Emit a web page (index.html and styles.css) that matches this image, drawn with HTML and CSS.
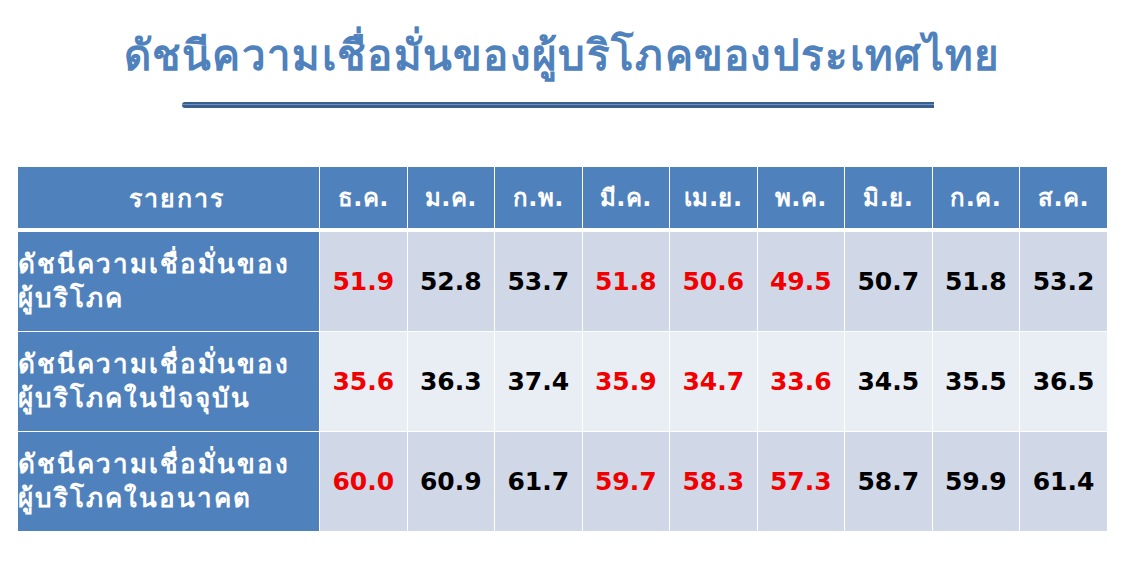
FILE: index.html
```html
<!DOCTYPE html>
<html lang="th">
<head>
<meta charset="utf-8">
<link rel="stylesheet" href="styles.css">
</head>
<body>
<div class="page">
  <h1 class="title">ดัชนีความเชื่อมั่นของผู้บริโภคของประเทศไทย</h1>
  <div class="rule"></div>
  <table class="grid">
    <thead>
      <tr>
        <th class="label-head">รายการ</th>
        <th>ธ.ค.</th><th>ม.ค.</th><th>ก.พ.</th><th>มี.ค.</th><th>เม.ย.</th><th>พ.ค.</th><th>มิ.ย.</th><th>ก.ค.</th><th>ส.ค.</th>
      </tr>
    </thead>
    <tbody>
      <tr class="dark">
        <td class="label">ดัชนีความเชื่อมั่นของ<br>ผู้บริโภค</td>
        <td class="red">51.9</td><td>52.8</td><td>53.7</td><td class="red">51.8</td><td class="red">50.6</td><td class="red">49.5</td><td>50.7</td><td>51.8</td><td>53.2</td>
      </tr>
      <tr class="light">
        <td class="label">ดัชนีความเชื่อมั่นของ<br>ผู้บริโภคในปัจจุบัน</td>
        <td class="red">35.6</td><td>36.3</td><td>37.4</td><td class="red">35.9</td><td class="red">34.7</td><td class="red">33.6</td><td>34.5</td><td>35.5</td><td>36.5</td>
      </tr>
      <tr class="dark">
        <td class="label">ดัชนีความเชื่อมั่นของ<br>ผู้บริโภคในอนาคต</td>
        <td class="red">60.0</td><td>60.9</td><td>61.7</td><td class="red">59.7</td><td class="red">58.3</td><td class="red">57.3</td><td>58.7</td><td>59.9</td><td>61.4</td>
      </tr>
    </tbody>
  </table>
</div>
</body>
</html>
```

FILE: styles.css
```css
html, body {
  margin: 0;
  padding: 0;
  background: #ffffff;
}
.page {
  width: 1124px;
  height: 574px;
  padding-top: 26px;
  box-sizing: border-box;
  font-family: "DejaVu Sans", "Noto Sans", sans-serif;
}
.title {
  margin: 0;
  text-align: center;
  color: #4f81bd;
  font-size: 42px;
  letter-spacing: 1.3px;
  font-weight: bold;
  line-height: 60px;
}
.rule {
  margin: 16px 0 0 182px;
  width: 752px;
  height: 6px;
  border-radius: 3px 0 0 3px;
  background: linear-gradient(#3a5f8c 0, #3a5f8c 2px, #6d93c4 2px, #6d93c4 3px, #3a5f8c 3px);
}
.grid {
  margin: 59px 0 0 18px;
  width: 1089px;
  border-collapse: collapse;
  table-layout: fixed;
}
.grid th, .grid td {
  border: 1px solid #ffffff;
  padding: 0;
  font-weight: bold;
  text-align: center;
}
.grid th {
  background: #4f81bd;
  color: #ffffff;
  height: 61px;
  font-size: 24px;
  letter-spacing: 0.5px;
  border-bottom: 4px solid #ffffff;
  border-top: none;
}
.grid th.label-head {
  width: 285px;
  border-left: none;
  font-size: 25px;
  letter-spacing: 2px;
  padding-left: 16px;
}
.grid th:last-child, .grid td:last-child {
  border-right: none;
}
.grid tr:last-child td {
  border-bottom: none;
}
.grid td {
  height: 97px;
  font-size: 25px;
  color: #000000;
}
.grid td.label {
  background: #4f81bd;
  color: #ffffff;
  text-align: left;
  font-size: 26px;
  letter-spacing: 2px;
  line-height: 34px;
  border-left: none;
  padding-bottom: 2px;
}
.grid tr.dark td { background-color: #d0d8e8; }
.grid tr.light td { background-color: #e9edf4; }
.grid tr td.label { background-color: #4f81bd; }
.grid td.red { color: #f00000; }
```
